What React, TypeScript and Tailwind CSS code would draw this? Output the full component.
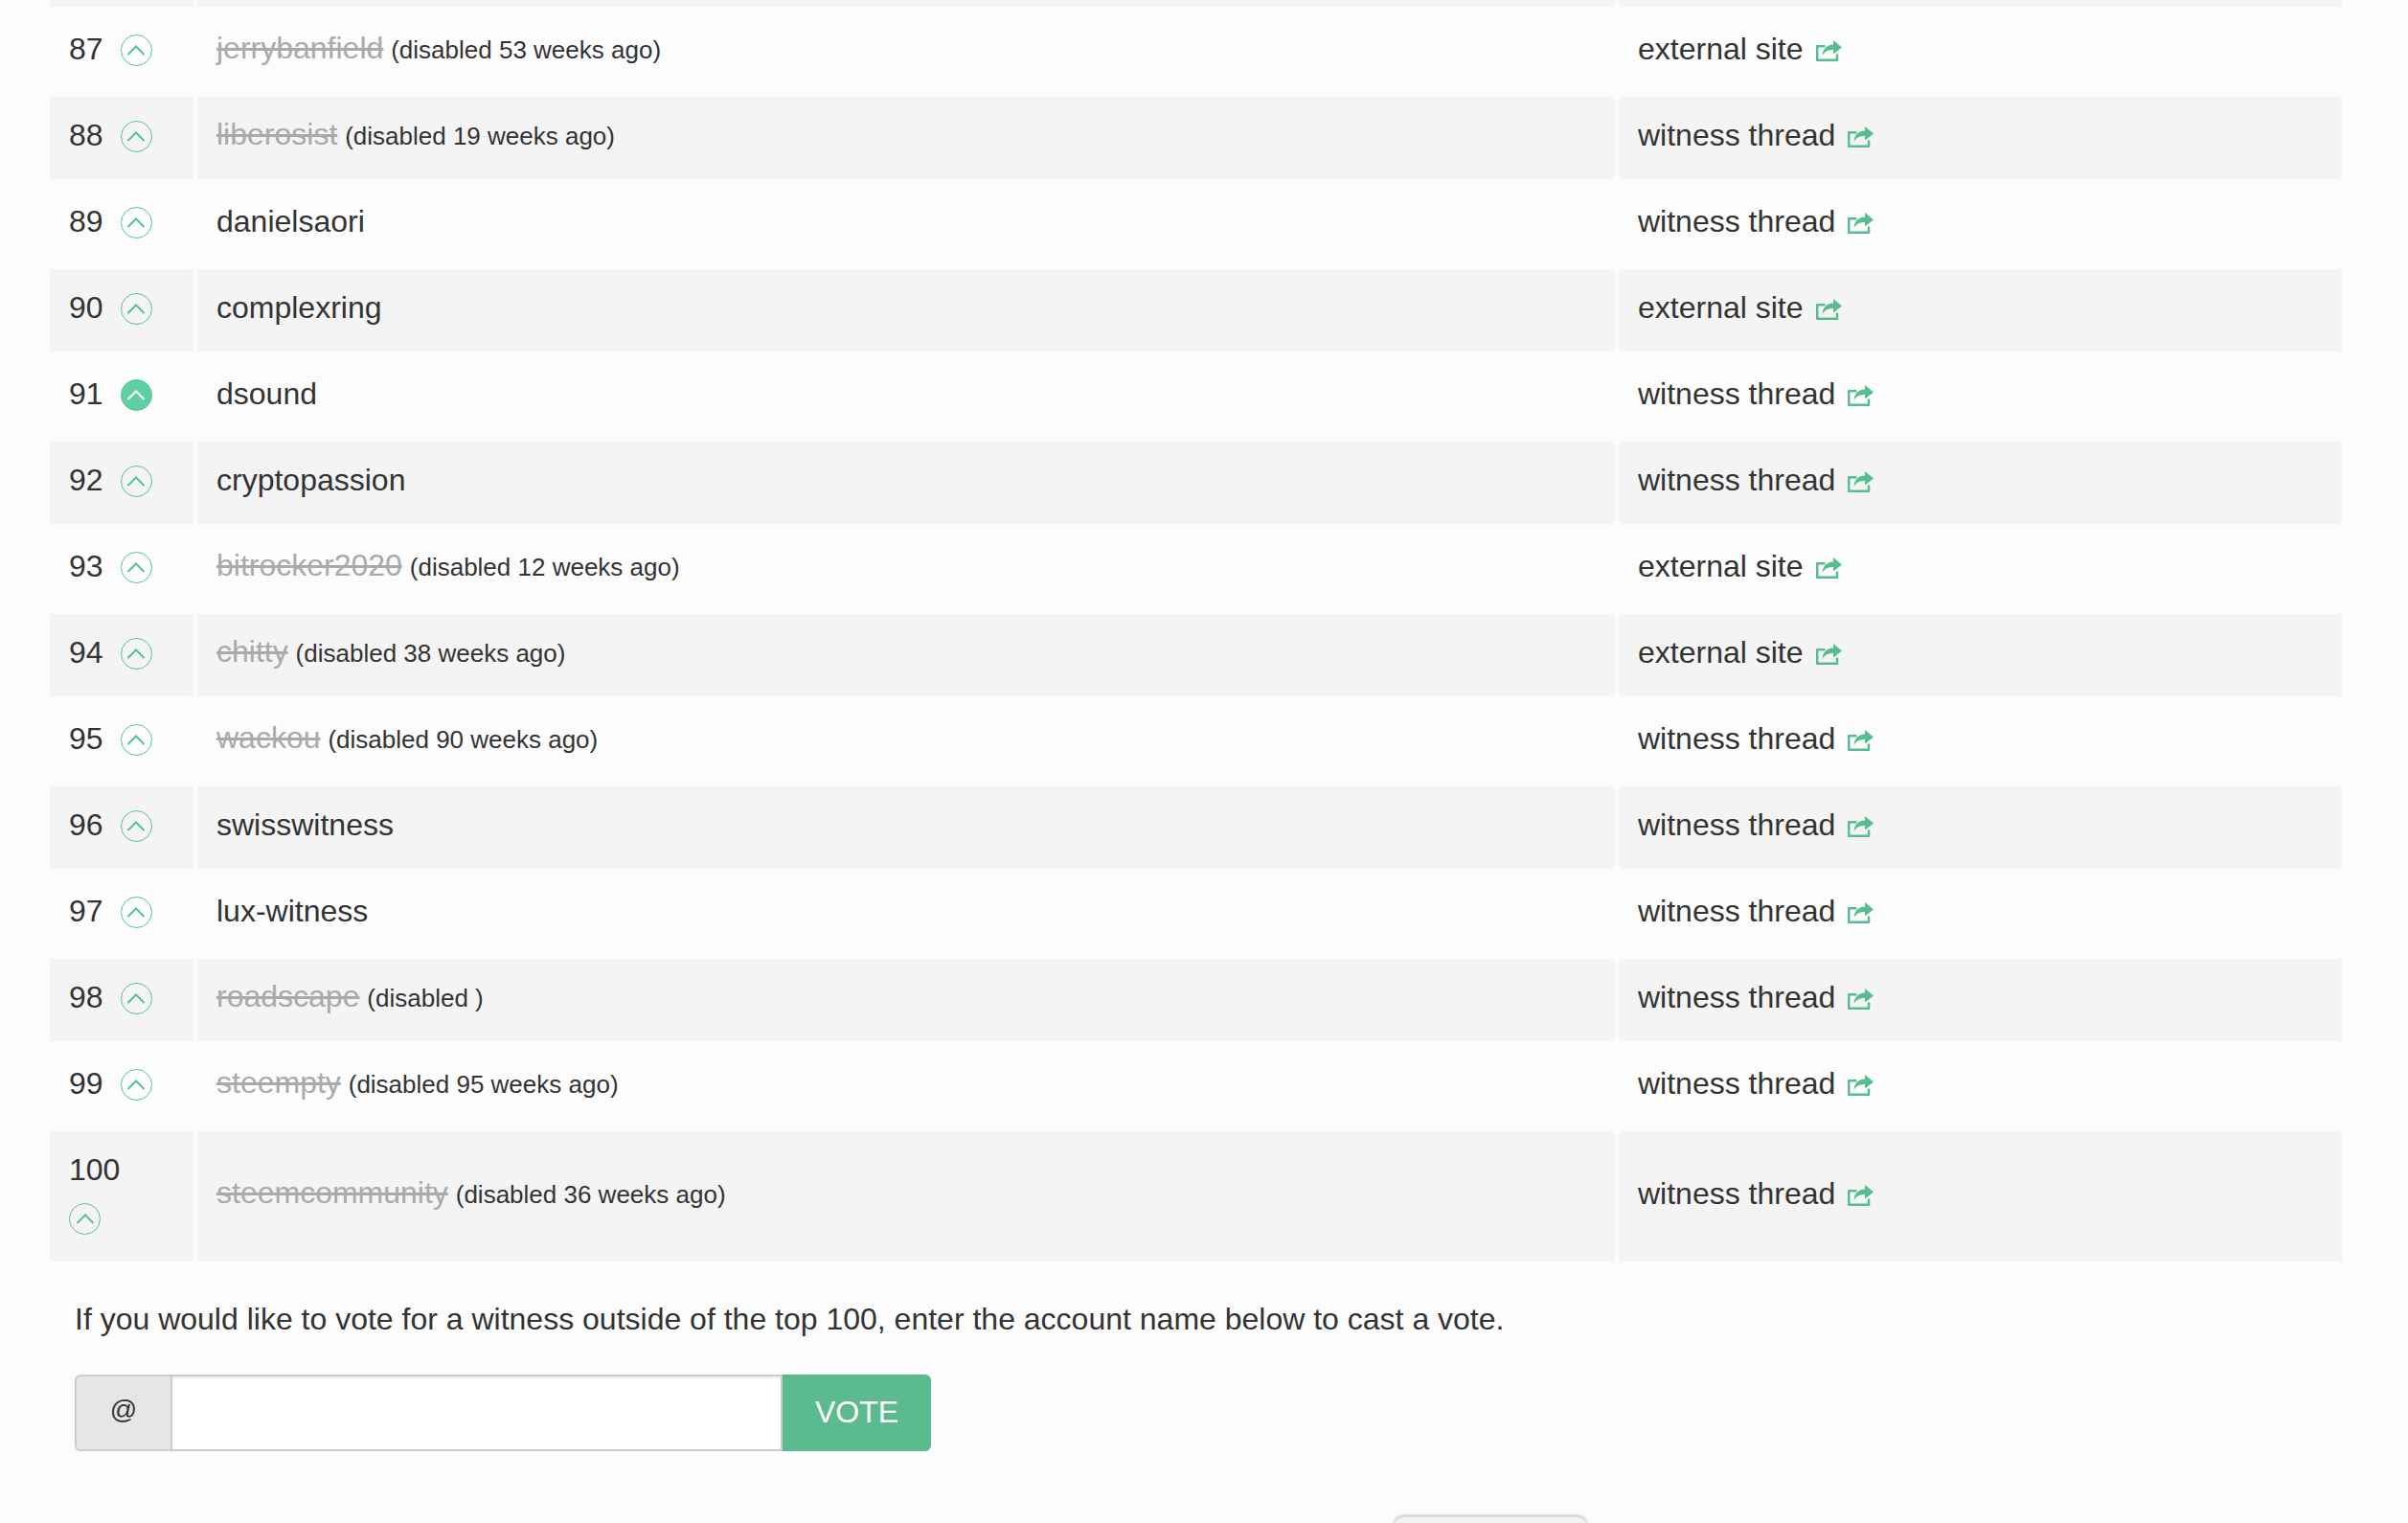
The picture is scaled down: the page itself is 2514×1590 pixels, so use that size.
type Witness = {
  rank: number;
  name: string;
  disabled?: string;
  link: string;
  voted?: boolean;
};

const witnesses: Witness[] = [
  { rank: 87, name: "jerrybanfield", disabled: "(disabled 53 weeks ago)", link: "external site" },
  { rank: 88, name: "liberosist", disabled: "(disabled 19 weeks ago)", link: "witness thread" },
  { rank: 89, name: "danielsaori", link: "witness thread" },
  { rank: 90, name: "complexring", link: "external site" },
  { rank: 91, name: "dsound", link: "witness thread", voted: true },
  { rank: 92, name: "cryptopassion", link: "witness thread" },
  { rank: 93, name: "bitrocker2020", disabled: "(disabled 12 weeks ago)", link: "external site" },
  { rank: 94, name: "chitty", disabled: "(disabled 38 weeks ago)", link: "external site" },
  { rank: 95, name: "wackou", disabled: "(disabled 90 weeks ago)", link: "witness thread" },
  { rank: 96, name: "swisswitness", link: "witness thread" },
  { rank: 97, name: "lux-witness", link: "witness thread" },
  { rank: 98, name: "roadscape", disabled: "(disabled )", link: "witness thread" },
  { rank: 99, name: "steempty", disabled: "(disabled 95 weeks ago)", link: "witness thread" },
  { rank: 100, name: "steemcommunity", disabled: "(disabled 36 weeks ago)", link: "witness thread" },
];

function VoteButton({ voted }: { voted?: boolean }) {
  return (
    <span
      className={`flex h-[33px] w-[33px] items-center justify-center rounded-full border-[1.5px] border-[#55c296] ${
        voted ? "bg-[#5fd0a6] text-white" : "text-[#55c296]"
      }`}
    >
      <svg viewBox="0 0 20 20" className="h-5 w-5" fill="none" stroke="currentColor" strokeWidth="2">
        <path d="M1.5 14 L10 5.5 L18.5 14" />
      </svg>
    </span>
  );
}

function ShareIcon() {
  return (
    <svg viewBox="0 0 27 22" className="mt-[3px] h-[22px] w-[27px] text-[#55bd91]">
      <path
        d="M9.5 6.2 H1.2 V20.8 H22 V14.5"
        fill="none"
        stroke="currentColor"
        strokeWidth="2.5"
        strokeLinejoin="round"
      />
      <path d="M27 7.5 L18 0 V4.5 C11 5 7 9 6.5 16 C9 11.5 13 10 18 10 V14.5 Z" fill="currentColor" />
    </svg>
  );
}

export default function App() {
  return (
    <div className="h-[1590px] overflow-hidden bg-[#fcfcfc] font-['Liberation_Sans',Arial,sans-serif] text-[32px] text-[#333]">
      <table className="-mt-[4px] ml-[48px] w-[2401px] table-fixed border-separate border-spacing-[4px]">
        <colgroup>
          <col className="w-[150px]" />
          <col className="w-[1480px]" />
          <col className="w-[755px]" />
        </colgroup>
        <tbody>
          <tr>
            <td className="h-[7px] bg-[#f4f4f4] p-0" />
            <td className="h-[7px] bg-[#f4f4f4] p-0" />
            <td className="h-[7px] bg-[#f4f4f4] p-0" />
          </tr>
          {witnesses.map((w) => {
            const rowBg = w.rank % 2 === 0 ? "bg-[#f4f4f4]" : "";
            return (
              <tr key={w.rank}>
                <td className={`${rowBg} py-[18px] pl-[20px] pr-[30px]`}>
                  <div className="flex flex-wrap items-center gap-x-[18px]">
                    <span className="flex h-[50px] items-center pb-[6px] leading-none">{w.rank}</span>
                    <span className="flex h-[50px] items-center pb-[3px]">
                      <VoteButton voted={w.voted} />
                    </span>
                  </div>
                </td>
                <td className={`${rowBg} px-[20px] pb-[6px] align-middle leading-[46px]`}>
                  {w.disabled ? (
                    <>
                      <span className="text-[#aaa] line-through">{w.name}</span>{" "}
                      <span className="-ml-[1px] text-[26px]">{w.disabled}</span>
                    </>
                  ) : (
                    w.name
                  )}
                </td>
                <td className={`${rowBg} px-[20px] pb-[6px] align-middle leading-[46px]`}>
                  <a className="inline-flex items-center gap-[13px]">
                    {w.link}
                    <ShareIcon />
                  </a>
                </td>
              </tr>
            );
          })}
        </tbody>
      </table>

      <div className="ml-[78px] mt-[33px]">
        <p className="leading-[46px]">
          If you would like to vote for a witness outside of the top 100, enter the account name below to cast a vote.
        </p>
        <form className="mt-[35px] flex h-[80px] w-[894px]">
          <span className="flex w-[100px] items-center justify-center rounded-l-[6px] border-2 border-r-0 border-[#ccc] bg-[#e6e6e6] pb-[6px] text-[28px]">
            @
          </span>
          <input
            type="text"
            className="w-[639px] border-2 border-[#ccc] bg-white shadow-[inset_0_2px_2px_rgba(0,0,0,0.08)] outline-none"
          />
          <button type="button" className="w-[155px] rounded-r-[6px] bg-[#5bbb8f] pb-[2px] text-[32px] text-white">
            VOTE
          </button>
        </form>
      </div>

      <button
        type="button"
        className="ml-[1455px] mt-[68px] block h-[60px] w-[202px] rounded-[10px] border border-[#ddd] bg-[#f2f2f2] shadow-[0_-1px_3px_rgba(0,0,0,0.25)]"
      />
    </div>
  );
}
